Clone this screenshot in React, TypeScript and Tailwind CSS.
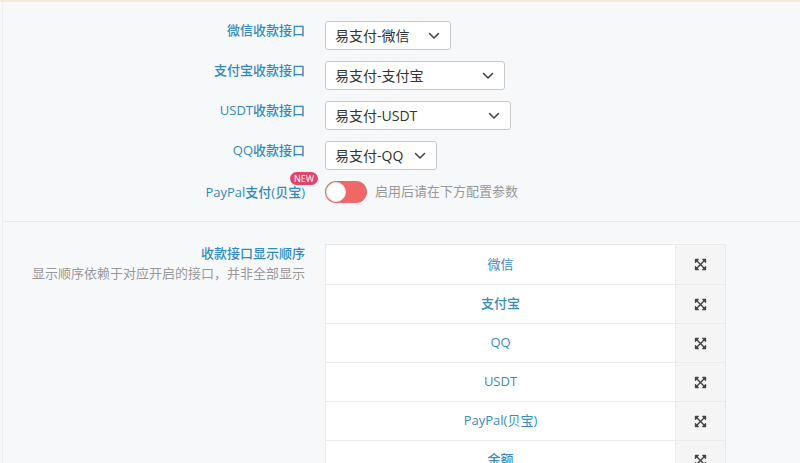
import React from "react";
import { FaExpandArrowsAlt } from "react-icons/fa";

const font = { fontFamily: '"Open Sans", "Noto Sans CJK SC", sans-serif' };

function Chevron() {
  return (
    <svg width="12" height="8" viewBox="0 0 12 8" className="shrink-0">
      <path d="M1.5 1.5 L6 6 L10.5 1.5" fill="none" stroke="#444" strokeWidth="1.6" strokeLinecap="round" strokeLinejoin="round" />
    </svg>
  );
}

function Select({ value, width }: { value: string; width: number }) {
  return (
    <div
      className="h-[29px] flex items-center justify-between pl-[9px] pr-[10px] bg-white border border-[#c9c9c9] rounded-[3px] text-[14px] text-[#333]"
      style={{ width }}
    >
      <span>{value}</span>
      <Chevron />
    </div>
  );
}

function Row({ label, children }: { label: React.ReactNode; children: React.ReactNode }) {
  return (
    <div className="flex items-start h-[40px]">
      <div className="w-[302px] text-right text-[13px] font-medium text-[#2f8bc2] leading-[16px] pt-[1px]">{label}</div>
      <div className="ml-[20px]">{children}</div>
    </div>
  );
}

const items = ["微信", "支付宝", "QQ", "USDT", "PayPal(贝宝)", "余额"];

export default function App() {
  return (
    <div className="w-[800px] h-[463px] overflow-hidden bg-[#f7f8fa] border-t-2 border-[#f1ead9]" style={font}>
      <div className="border-l border-[#eeeeee] ml-[2px] h-full">
        <div className="pt-[19px] border-b border-[#e9eaec] h-[220px]">
          <Row label="微信收款接口"><Select value="易支付-微信" width={126} /></Row>
          <Row label="支付宝收款接口"><Select value="易支付-支付宝" width={180} /></Row>
          <Row label="USDT收款接口"><Select value="易支付-USDT" width={186} /></Row>
          <Row label="QQ收款接口"><Select value="易支付-QQ" width={112} /></Row>
          <div className="flex items-center h-[22px]">
            <div className="w-[302px] text-right text-[13px] font-medium text-[#2f8bc2] leading-[16px] relative">
              <span className="relative">
                PayPal支付(贝宝)
                <span className="absolute -top-[11px] -right-[13px] bg-[#e5436a] text-white text-[9px] leading-[13px] px-[4px] rounded-full font-normal">NEW</span>
              </span>
            </div>
            <div className="ml-[20px] flex items-center">
              <div className="w-[42px] h-[22px] rounded-full bg-[#ef6767] relative">
                <div className="absolute left-[1px] top-[1px] w-[20px] h-[20px] rounded-full bg-white border border-[#e8e8e8]" />
              </div>
              <span className="ml-[8px] text-[13px] text-[#999]">启用后请在下方配置参数</span>
            </div>
          </div>
        </div>
        <div className="flex pt-[22px]">
          <div className="w-[302px] text-right">
            <div className="text-[13px] font-medium text-[#2f8bc2] leading-[16px] pt-[1px]">收款接口显示顺序</div>
            <div className="text-[13px] text-[#999] leading-[16px] mt-[4px]">显示顺序依赖于对应开启的接口，并非全部显示</div>
          </div>
          <div className="ml-[20px] w-[401px] border border-[#e8e9eb] bg-white">
            {items.map((it, i) => (
              <div key={it} className={"flex h-[39px] " + (i > 0 ? "border-t border-[#ebebeb]" : "")}>
                <div className={"flex-1 flex items-center justify-center text-[13px] text-[#3a8cbf] " + (it === "支付宝" || it === "余额" ? "font-medium" : "")}>
                  {it}
                </div>
                <div className="w-[50px] bg-[#f5f5f5] border-l border-[#ebebeb] flex items-center justify-center text-[#444]">
                  <FaExpandArrowsAlt size={13} />
                </div>
              </div>
            ))}
          </div>
        </div>
      </div>
    </div>
  );
}
